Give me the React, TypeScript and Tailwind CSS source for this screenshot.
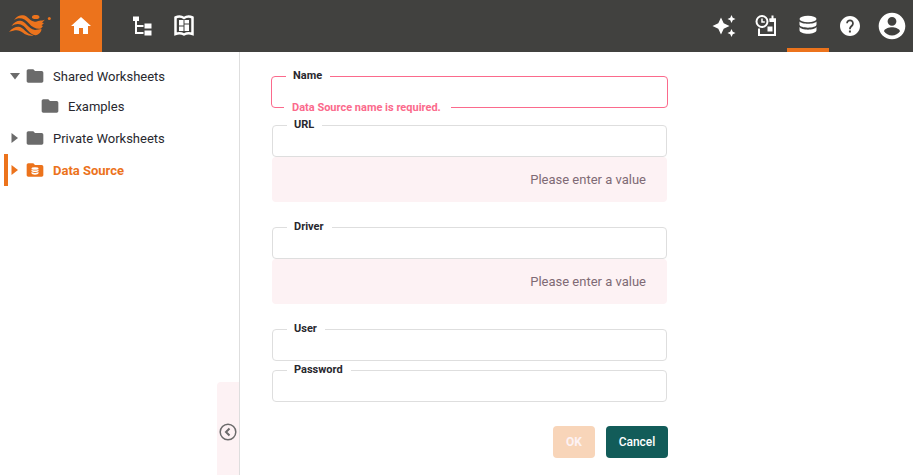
import { useId, type ReactNode } from "react";

function Logo() {
  return (
    <svg viewBox="0 0 42 22" className="h-[22px] w-[42px] fill-[#ec731c]" aria-hidden="true">
      <path d="M5 5C8 1 11 0 14 .3C19 .8 20 5.500 25 6.500C28 7.200 29.500 5.500 32 5.600C33.500 5.600 35 5 36 4.500L33 7.800L35 8L32.500 10.500L34 11L32 13.500C28 14.500 23 12.500 20 8.500C17 5 14 3.200 10.500 3.200C8.500 3.200 7 3.800 5 5Z" />
      <path d="M2.500 11C5.500 6.800 8.500 5.500 11.500 5.800C17 6.300 18.500 13.500 26 15L32.500 14C32.500 17 30 19.500 26.500 20.300C20.500 19 17.500 13.500 14.500 11C11 8.300 7 8.200 2.500 11Z" />
      <path d="M0 16.800C3.500 13 7 11.400 10 11.800C15 12.500 16.500 18.500 24.500 20.600C19.500 21.300 16.500 19.800 14 17.800C10 14.500 7 14.500 0 16.800Z" />
      <ellipse cx="26.700" cy="2" rx="3.800" ry="2.100" />
      <circle cx="40.300" cy="3.500" r="1.500" />
    </svg>
  );
}

function Icon({ d, className = "size-6" }: { d: string; className?: string }) {
  return (
    <svg viewBox="0 0 24 24" className={className} fill="currentColor" fillRule="evenodd" aria-hidden="true">
      <path d={d} />
    </svg>
  );
}

const HOME = "M10 20v-6h4v6h5v-8h3L12 3 2 12h3v8z";
const TREE = "M3 2.500h6v4.500H3zM14.500 9.500h7v5h-7zM14.500 16.500h7v5h-7zM13.500 13H7v5h6.500v2H5V7h2v4h6.500z";
const SPARKLES =
  "M19.500 9l1.250-2.750L23.500 5l-2.750-1.250L19.500 1l-1.250 2.750L15.500 5l2.750 1.250zM11.700 9.300L9 3.500 6.300 9.300.500 12l5.800 2.700L9 20.500l2.700-5.800L17.500 12zM19.500 15l-1.250 2.750L15.500 19l2.750 1.250L19.500 23l1.250-2.750L23.500 19l-2.750-1.250z";
const HELP =
  "M12 2C6.480 2 2 6.480 2 12s4.480 10 10 10 10-4.480 10-10S17.520 2 12 2zm.9 16.500h-2v-2h2v2zm2-6.500l-.9.900C13.200 13.700 12.800 14.200 12.800 15.300h-1.700v-.5c0-1.100.45-2.100 1.170-2.830l1.240-1.260c.37-.36.59-.86.59-1.410 0-1.200-.9-2.100-2.100-2.100s-2.100.9-2.100 2.100H8.200c0-2.210 1.690-3.800 3.800-3.800s3.800 1.690 3.800 3.800c0 .88-.36 2.050-.9 2.700z";
const ACCOUNT =
  "M12 2C6.480 2 2 6.480 2 12s4.480 10 10 10 10-4.480 10-10S17.520 2 12 2zm0 3.200a3.300 3.300 0 1 1 0 6.600 3.300 3.300 0 0 1 0-6.600zM12 19.200c-2.500 0-4.710-1.280-6-3.220.03-1.990 4-3.080 6-3.080 1.990 0 5.970 1.090 6 3.080-1.290 1.940-3.500 3.220-6 3.220z";
const FOLDER = "M10 4H4c-1.100 0-2 .9-2 2v12c0 1.100.9 2 2 2h16c1.100 0 2-.9 2-2V8c0-1.100-.9-2-2-2h-8z";

function BookIcon() {
  return (
    <svg viewBox="0 0 24 24" className="size-6" aria-hidden="true" fill="none" stroke="white">
      <path d="M3.500 3.500Q8 1.500 12 4Q16 1.500 20.500 3.500V20Q16 18.500 12 20.500Q8 18.500 3.500 20Z" strokeWidth="2.500" />
      <path d="M7 6h4.500v5.500H7zM12.500 6H17v3.500h-4.500zM7 12.500h4.500V17H7zM12.500 10.500H17V17h-4.500z" fill="white" stroke="none" />
    </svg>
  );
}

function ScheduleIcon() {
  return (
    <svg viewBox="0 0 24 24" className="size-6" aria-hidden="true" fill="none" stroke="white" strokeWidth="2">
      <circle cx="8" cy="7.500" r="5.500" />
      <path d="M8 4.500V8h2.800" strokeWidth="1.500" />
      <path d="M5 14.500V21h16V5.500h-5.500M18.500 1.500V5.500" />
      <path d="M15.500 4.500h6.500V8h-6.500zM13.500 12.500h5v5h-5z" fill="white" stroke="none" />
    </svg>
  );
}

function DatabaseIcon({ className = "size-6" }: { className?: string }) {
  return (
    <svg viewBox="0 0 24 24" className={className} aria-hidden="true" fill="currentColor">
      <ellipse cx="12" cy="6" rx="8.500" ry="3.200" />
      <path d="M3.500 8.500v3c0 4.200 17 4.200 17 0v-3c-2 3-15 3-17 0zM3.500 14v3c0 5 17 5 17 0v-3c-2 3.500-15 3.500-17 0z" />
    </svg>
  );
}

function NavButton({ label, className = "", children }: { label: string; className?: string; children: ReactNode }) {
  return (
    <button type="button" aria-label={label} className={`flex h-full w-[42px] items-center justify-center ${className}`}>
      {children}
    </button>
  );
}

function TreeItem({
  label,
  state,
  className = "h-8",
  active = false,
}: {
  label: string;
  state?: "open" | "closed";
  className?: string;
  active?: boolean;
}) {
  return (
    <li className={`flex items-center border-l-4 ${active ? "border-[#ec731c] font-bold text-[#ec731c]" : "border-transparent text-[#28282e]"} ${className}`}>
      <span className={`flex w-[17px] shrink-0 items-center pl-[2px] ${active ? "text-[#ec731c]" : "text-[#6b6b6b]"}`}>
        {state && (
          <svg viewBox="0 0 10 10" className="size-[10px]" fill="currentColor" aria-hidden="true">
            <path d={state === "open" ? "M0 2h10L5 8.500z" : "M1.500 0v10L8 5z"} />
          </svg>
        )}
      </span>
      <button type="button" className="flex items-center gap-[8px]">
        <span className={`relative flex ${active ? "text-[#ec731c]" : "text-[#6b6b6b]"}`}>
          <Icon d={FOLDER} className="size-5" />
          {active && (
            <span className="absolute inset-0 flex items-center justify-center pt-px text-white">
              <DatabaseIcon className="size-[10px]" />
            </span>
          )}
        </span>
        <span className="pt-[2px]">{label}</span>
      </button>
    </li>
  );
}

function Field({ label, type = "text", error, message }: { label: string; type?: string; error?: string; message?: string }) {
  const id = useId();
  return (
    <div>
      <div className={`relative ${error ? "-mx-px" : ""}`}>
        <label htmlFor={id} className="absolute -top-[7px] left-[15px] bg-white pr-2 pl-[7px] text-[11px] leading-[14px] font-bold text-[#28282e]">
          {label}
        </label>
        <input
          id={id}
          type={type}
          aria-invalid={!!error}
          aria-describedby={error || message ? `${id}-note` : undefined}
          className={`block h-8 w-full rounded border bg-transparent px-4 text-[13px] outline-none ${error ? "border-[#fb6a8c]" : "border-[#dedede]"}`}
        />
        {error && (
          <p id={`${id}-note`} className="absolute -bottom-[7px] left-[13px] bg-white pr-[10px] pl-2 text-[11px] leading-[14px] font-bold text-[#fb6a8c]">
            {error}
          </p>
        )}
      </div>
      {message && (
        <p id={`${id}-note`} className="flex h-[45px] items-center justify-end rounded bg-[#fdf2f4] px-[21px] text-[13px] text-[#7f6a75]">
          {message}
        </p>
      )}
    </div>
  );
}

export default function App() {
  return (
    <div className="flex min-h-screen flex-col bg-white font-[Roboto,sans-serif] text-[13px] text-[#28282e]">
      <header className="flex h-[52px] items-center bg-[#41413f] text-white">
        <a href="#home" aria-label="Main page" className="flex w-[60px] shrink-0 pl-[9px]">
          <Logo />
        </a>
        <NavButton label="Home" className="bg-[#ec731c]">
          <Icon d={HOME} />
        </NavButton>
        <div className="ml-[19px] flex h-full">
          <NavButton label="Repository">
            <Icon d={TREE} />
          </NavButton>
          <NavButton label="Dashboards">
            <BookIcon />
          </NavButton>
        </div>
        <div className="ml-auto flex h-full">
          <NavButton label="Assistant">
            <Icon d={SPARKLES} />
          </NavButton>
          <NavButton label="Schedule">
            <ScheduleIcon />
          </NavButton>
          <NavButton label="Data" className="border-b-4 border-[#ec731c] pt-[2px]">
            <DatabaseIcon />
          </NavButton>
          <NavButton label="Help">
            <Icon d={HELP} />
          </NavButton>
          <NavButton label="Account">
            <Icon d={ACCOUNT} className="size-8" />
          </NavButton>
        </div>
      </header>
      <div className="flex grow">
        <aside className="flex w-60 shrink-0 flex-col justify-between border-r border-[#dedede]">
          <ul className="pt-[10px] pl-1">
            <TreeItem label="Shared Worksheets" state="open" className="h-7" />
            <TreeItem label="Examples" className="h-8 pl-[15px]" />
            <TreeItem label="Private Worksheets" state="closed" />
            <TreeItem label="Data Source" state="closed" active />
          </ul>
          <button
            type="button"
            aria-label="Collapse sidebar"
            className="flex h-[93px] w-[22px] justify-center self-end rounded-tl-sm bg-[#fdf2f4] pt-[41px] text-[#6b6b6b]"
          >
            <svg viewBox="0 0 18 18" className="size-[18px]" fill="none" stroke="currentColor" strokeWidth="1.500" aria-hidden="true">
              <circle cx="9" cy="9" r="7.800" />
              <path d="M10.500 5.500L7 9l3.500 3.500" strokeWidth="2" />
            </svg>
          </button>
        </aside>
        <main className="min-w-0 grow px-8 pt-6 pb-4">
          <form className="flex max-w-[395px] flex-col">
            <div className="flex flex-col gap-[17px]">
              <Field label="Name" error="Data Source name is required." />
              <div className="flex flex-col gap-[25px]">
                <Field label="URL" message="Please enter a value" />
                <Field label="Driver" message="Please enter a value" />
                <div className="flex flex-col gap-[9px]">
                  <Field label="User" />
                  <Field label="Password" type="password" />
                </div>
              </div>
            </div>
            <div className="-mr-px mt-6 flex justify-end gap-[11px] text-[12px] font-medium">
              <button type="submit" disabled className="h-8 w-[42px] rounded bg-[#f8d5b9] font-bold text-[#fdf2f4]">
                OK
              </button>
              <button type="button" className="h-8 w-[62px] rounded bg-[#125c59] text-white">
                Cancel
              </button>
            </div>
          </form>
        </main>
      </div>
    </div>
  );
}
